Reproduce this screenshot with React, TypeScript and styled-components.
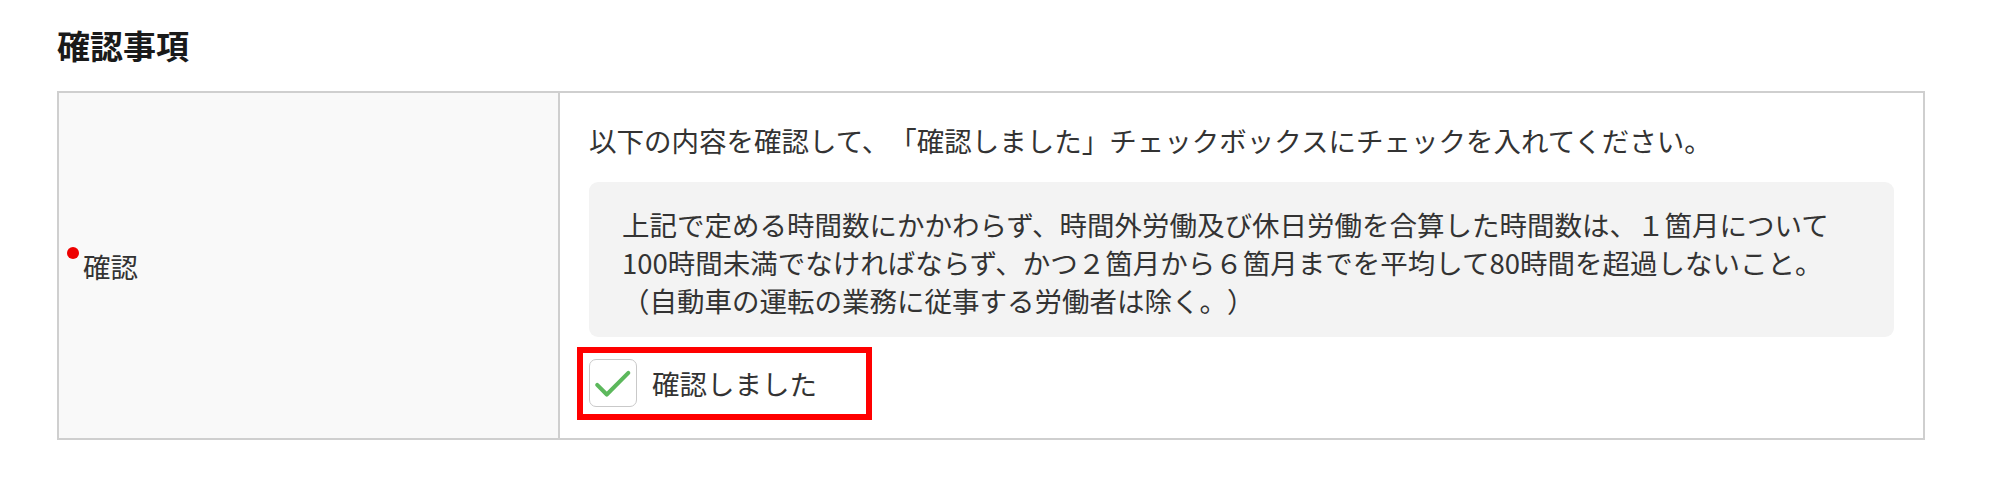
import React from "react";
import styled, { createGlobalStyle } from "styled-components";

const GlobalStyle = createGlobalStyle`
  html, body {
    margin: 0;
    padding: 0;
    background: #ffffff;
  }
  body {
    font-family: "Noto Sans CJK JP", "Noto Sans", sans-serif;
    color: #333333;
    text-spacing-trim: space-all;
  }
`;

const Page = styled.div`
  padding: 23px 0 0 57px;
  box-sizing: border-box;
  width: 1995px;
`;

const Title = styled.h2`
  margin: 0 0 23px;
  font-size: 33px;
  line-height: 45px;
  font-weight: 700;
  color: #1a1a1a;
  letter-spacing: 0;
`;

const Table = styled.div`
  display: grid;
  grid-template-columns: 501px 1fr;
  width: 1868px;
  box-sizing: border-box;
  border: 2px solid #cfcfcf;
`;

const LabelCell = styled.div`
  display: flex;
  align-items: center;
  padding: 0 0 0 8px;
  background: #f9f9f9;
  border-right: 2px solid #cfcfcf;
`;

const Label = styled.span`
  font-size: 27.5px;
  line-height: 38px;
  color: #333333;
`;

const RequiredDot = styled.span`
  display: inline-block;
  width: 12px;
  height: 12px;
  border-radius: 50%;
  background: #ee0000;
  vertical-align: top;
  margin: 0 4px 0 0;
`;

const ContentCell = styled.div`
  display: flex;
  flex-direction: column;
  align-items: flex-start;
  padding: 28px 29px 18px 29px;
  background: #ffffff;
`;

const Lead = styled.p`
  margin: 0;
  font-size: 27.5px;
  line-height: 38px;
  white-space: nowrap;
`;

const Notice = styled.div`
  align-self: stretch;
  margin-top: 23px;
  padding: 23px 32px 18px 33px;
  background: #f3f3f3;
  border-radius: 9px;
  font-size: 27.5px;
  line-height: 38px;
  white-space: nowrap;
`;

const Highlight = styled.div`
  display: inline-flex;
  margin: 10px 0 0 -12px;
  padding: 6px 49px 7px 6px;
  border: 6px solid #ff0000;
`;

const CheckRow = styled.label`
  display: flex;
  align-items: center;
  gap: 15px;
  cursor: pointer;
`;

const Box = styled.span`
  display: inline-flex;
  align-items: center;
  justify-content: center;
  width: 48px;
  height: 48px;
  box-sizing: border-box;
  border: 1.5px solid #c9c9c9;
  border-radius: 7px;
  background: #ffffff;
`;

const CheckText = styled.span`
  font-size: 27.5px;
  line-height: 38px;
  color: #333333;
`;

const CheckMark = () => (
  <svg width="48" height="48" viewBox="0 0 48 48" aria-hidden="true">
    <path
      d="M7.5 26 L17.5 36 L40 13.5"
      fill="none"
      stroke="#5cb85c"
      strokeWidth="4.2"
      strokeLinecap="round"
      strokeLinejoin="round"
    />
  </svg>
);

export default function App() {
  return (
    <>
      <GlobalStyle />
      <Page>
        <Title>確認事項</Title>
        <Table>
          <LabelCell>
            <Label>
              <RequiredDot />
              確認
            </Label>
          </LabelCell>
          <ContentCell>
            <Lead>
              以下の内容を確認して、「確認しました」チェックボックスにチェックを入れてください。
            </Lead>
            <Notice>
              上記で定める時間数にかかわらず、時間外労働及び休日労働を合算した時間数は、１箇月について
              <br />
              100時間未満でなければならず、かつ２箇月から６箇月までを平均して80時間を超過しないこと。
              <br />
              （自動車の運転の業務に従事する労働者は除く。）
            </Notice>
            <Highlight>
              <CheckRow>
                <Box>
                  <CheckMark />
                </Box>
                <CheckText>確認しました</CheckText>
              </CheckRow>
            </Highlight>
          </ContentCell>
        </Table>
      </Page>
    </>
  );
}
